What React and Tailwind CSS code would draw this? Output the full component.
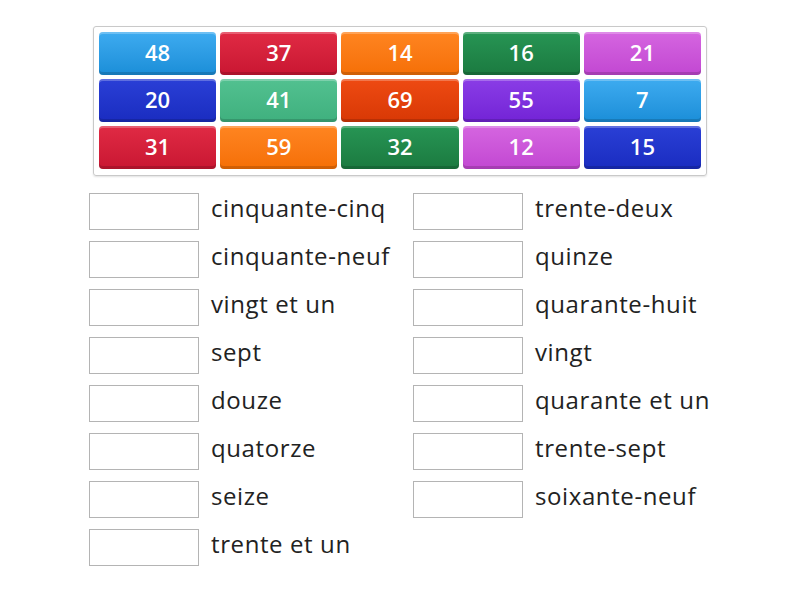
const tiles = [
  ['48', 'from-[#3dabf0] to-[#1a8ed8]'],
  ['37', 'from-[#e02a44] to-[#c91632]'],
  ['14', 'from-[#ff8520] to-[#f56f05]'],
  ['16', 'from-[#279554] to-[#1b7a40]'],
  ['21', 'from-[#d565e0] to-[#c247d2]'],
  ['20', 'from-[#2a3fd6] to-[#1a2cc0]'],
  ['41', 'from-[#52c190] to-[#3fb07e]'],
  ['69', 'from-[#ee4a12] to-[#d83805]'],
  ['55', 'from-[#8a3ce6] to-[#7323d6]'],
  ['7', 'from-[#3dabf0] to-[#1a8ed8]'],
  ['31', 'from-[#e02a44] to-[#c91632]'],
  ['59', 'from-[#ff8520] to-[#f56f05]'],
  ['32', 'from-[#279554] to-[#1b7a40]'],
  ['12', 'from-[#d565e0] to-[#c247d2]'],
  ['15', 'from-[#2a3fd6] to-[#1a2cc0]'],
];

const left = ['cinquante-cinq', 'cinquante-neuf', 'vingt et un', 'sept', 'douze', 'quatorze', 'seize', 'trente et un'];
const right = ['trente-deux', 'quinze', 'quarante-huit', 'vingt', 'quarante et un', 'trente-sept', 'soixante-neuf'];

function Row({ label }) {
  return (
    <div className="flex items-center h-[37px]">
      <div className="w-[110px] h-[37px] border border-[#b4b4b4] bg-white shrink-0" />
      <span className="ml-[12px] text-[24px] tracking-[0.6px] leading-none text-[#222] -mt-[8px]">{label}</span>
    </div>
  );
}

export default function App() {
  return (
    <div className="w-[800px] h-[600px] bg-white" style={{ fontFamily: '"Open Sans", "Noto Sans", sans-serif' }}>
      <div className="w-[622px] mx-auto pt-[26px]">
        <div className="mx-[4px] border border-[#c9c9c9] rounded-[3px] px-[5px] pt-[5px] pb-[6px] grid grid-cols-5 gap-x-[4px] gap-y-[4px] shadow-[0_1px_2px_rgba(0,0,0,0.12)]">
          {tiles.map(([n, c], i) => (
            <div
              key={i}
              className={`h-[43px] rounded-[4px] bg-gradient-to-b ${c} flex items-center justify-center text-white text-[22px] font-semibold pb-[3px] shadow-[inset_0_2px_0_rgba(255,255,255,0.25),inset_0_-3px_0_rgba(0,0,0,0.15)]`}
            >
              {n}
            </div>
          ))}
        </div>
        <div className="grid grid-cols-[324px_1fr] mt-[17px]">
          <div className="flex flex-col gap-[11px]">
            {left.map((l) => <Row key={l} label={l} />)}
          </div>
          <div className="flex flex-col gap-[11px]">
            {right.map((l) => <Row key={l} label={l} />)}
          </div>
        </div>
      </div>
    </div>
  );
}
